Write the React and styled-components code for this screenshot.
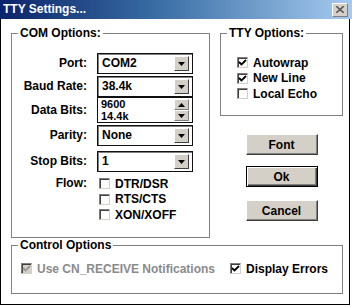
import React from 'react'
import styled, { createGlobalStyle } from 'styled-components'

const GlobalStyle = createGlobalStyle`
    html, body {
        margin: 0;
        padding: 0;
        background: #fff;
    }
    body {
        font-family: "Liberation Sans", Arial, sans-serif;
        font-size: 12px;
        font-weight: 700;
        color: #000;
    }
`

function Arrow({ up }) {
    return (
        <svg width="7" height="4" viewBox="0 0 7 4">
            <polygon points={up ? '3.5,0 7,4 0,4' : '0,0 7,0 3.5,4'} fill="#000" />
        </svg>
    )
}

function Tick({ color = '#000' }) {
    return (
        <svg width="9" height="9" viewBox="0 0 9 9">
            <path d="M1 4 L3.5 6.5 L8 2" stroke={color} strokeWidth="1.8" fill="none" />
        </svg>
    )
}

function Combo({ value }) {
    return (
        <Field>
            <FieldText>{value}</FieldText>
            <DropButton><Arrow /></DropButton>
        </Field>
    )
}

function CheckItem({ label, checked, disabled }) {
    return (
        <CheckRow>
            <CheckBox $disabled={disabled}>
                {checked && <Tick color={disabled ? '#9a9a9a' : '#000'} />}
            </CheckBox>
            <CheckLabel $disabled={disabled}>{label}</CheckLabel>
        </CheckRow>
    )
}

export default function App() {
    return (
        <>
            <GlobalStyle />
            <Window>
                <TitleBar>
                    <Title>TTY Settings...</Title>
                    <CloseButton>
                        <svg width="8" height="7" viewBox="0 0 8 7">
                            <path d="M0 0 L8 7 M8 0 L0 7" stroke="#555" strokeWidth="1.6" />
                        </svg>
                    </CloseButton>
                </TitleBar>
                <Body>
                    <TopRow>
                        <Group $width={199} $height={212}>
                            <Legend>COM Options:</Legend>
                            <FormRow $mt={13}>
                                <Label>Port:</Label>
                                <Combo value="COM2" />
                            </FormRow>
                            <FormRow $mt={2}>
                                <Label>Baud Rate:</Label>
                                <Combo value="38.4k" />
                            </FormRow>
                            <FormRow $mt={0}>
                                <Label>Data Bits:</Label>
                                <ListField>
                                    <ListItems>
                                        <ListItem>9600</ListItem>
                                        <ListItem>14.4k</ListItem>
                                    </ListItems>
                                    <ScrollBar>
                                        <ScrollButton><Arrow up /></ScrollButton>
                                        <ScrollButton><Arrow /></ScrollButton>
                                    </ScrollBar>
                                </ListField>
                            </FormRow>
                            <FormRow $mt={2}>
                                <Label>Parity:</Label>
                                <Combo value="None" />
                            </FormRow>
                            <FormRow $mt={5}>
                                <Label>Stop Bits:</Label>
                                <Combo value="1" />
                            </FormRow>
                            <FormRow $mt={4} $top>
                                <Label>Flow:</Label>
                                <FlowList>
                                    <CheckItem label="DTR/DSR" />
                                    <CheckItem label="RTS/CTS" />
                                    <CheckItem label="XON/XOFF" />
                                </FlowList>
                            </FormRow>
                        </Group>
                        <RightColumn>
                            <Group $height={90}>
                                <Legend>TTY Options:</Legend>
                                <TtyList>
                                    <CheckItem label="Autowrap" checked />
                                    <CheckItem label="New Line" checked />
                                    <CheckItem label="Local Echo" />
                                </TtyList>
                            </Group>
                            <Button $mt={18}>Font</Button>
                            <Button $mt={11} $default>Ok</Button>
                            <Button $mt={13}>Cancel</Button>
                        </RightColumn>
                    </TopRow>
                    <Group $height={56}>
                        <Legend>Control Options</Legend>
                        <ControlRow>
                            <CheckItem label="Use CN_RECEIVE Notifications" checked disabled />
                            <CheckItem label="Display Errors" checked />
                        </ControlRow>
                    </Group>
                </Body>
            </Window>
        </>
    )
}

const Window = styled.div`
    width: 352px;
    height: 305px;
    display: flex;
    flex-direction: column;
    overflow: hidden;
`

const TitleBar = styled.div`
    height: 19px;
    flex: none;
    display: flex;
    align-items: center;
    justify-content: space-between;
    padding: 0 4px 0 3px;
    background: linear-gradient(to right, #0a246a, #3a6ea5 45%, #a6caf0);
`

const Title = styled.span`
    color: #fff;
    font-size: 12px;
    line-height: 19px;
`

const CloseButton = styled.div`
    width: 16px;
    height: 14px;
    box-sizing: border-box;
    display: flex;
    align-items: center;
    justify-content: center;
    background: #d4d0c8;
    border-top: 1px solid #fff;
    border-left: 1px solid #fff;
    border-right: 1px solid #808080;
    border-bottom: 1px solid #808080;
`

const Body = styled.div`
    flex: 1;
    width: 350px;
    box-sizing: border-box;
    border-left: 1px solid #000;
    border-right: 1px solid #000;
    border-bottom: 1px solid #000;
    padding: 7px 6px 10px 10px;
    display: flex;
    flex-direction: column;
`

const TopRow = styled.div`
    display: flex;
    gap: 10px;
    align-items: flex-start;
`

const RightColumn = styled.div`
    width: 123px;
    display: flex;
    flex-direction: column;
    align-items: center;
`

const Group = styled.fieldset`
    margin: 0;
    padding: 0;
    min-width: 0;
    box-sizing: border-box;
    width: ${p => (p.$width ? `${p.$width}px` : '100%')};
    height: ${p => p.$height}px;
    border: 1px solid #808080;
    align-self: stretch;
`

const Legend = styled.legend`
    margin-left: 6px;
    padding: 0 2px;
    font-size: 12px;
    line-height: 14px;
`

const FormRow = styled.div`
    display: grid;
    grid-template-columns: 75px 96px;
    column-gap: 10px;
    align-items: ${p => (p.$top ? 'start' : 'center')};
    margin-top: ${p => p.$mt}px;
`

const Label = styled.span`
    text-align: right;
    line-height: 15px;
`

const Field = styled.div`
    height: 21px;
    box-sizing: border-box;
    border: 1px solid #111;
    box-shadow: inset 1px 1px #808080;
    background: #fff;
    display: flex;
    align-items: center;
    padding: 2px 2px 2px 4px;
`

const FieldText = styled.span`
    flex: 1;
    line-height: 15px;
`

const DropButton = styled.div`
    width: 15px;
    height: 15px;
    box-sizing: border-box;
    display: flex;
    align-items: center;
    justify-content: center;
    background: #d4d0c8;
    border-top: 1px solid #fff;
    border-left: 1px solid #fff;
    border-right: 1px solid #404040;
    border-bottom: 1px solid #404040;
    margin-right: 1px;
`

const ListField = styled.div`
    height: 26px;
    box-sizing: border-box;
    border: 1px solid #111;
    background: #fff;
    display: flex;
    padding: 0 2px 0 3px;
    overflow: hidden;
`

const ListItems = styled.div`
    flex: 1;
    display: flex;
    flex-direction: column;
`

const ListItem = styled.div`
    height: 12px;
    font-size: 11px;
    line-height: 12px;
`

const ScrollBar = styled.div`
    width: 15px;
    display: flex;
    flex-direction: column;
    justify-content: space-between;
    padding: 1px 1px 1px 0;
`

const ScrollButton = styled.div`
    height: 11px;
    box-sizing: border-box;
    display: flex;
    align-items: center;
    justify-content: center;
    background: #d4d0c8;
    border-top: 1px solid #fff;
    border-left: 1px solid #fff;
    border-right: 1px solid #808080;
    border-bottom: 1px solid #808080;
`

const FlowList = styled.div`
    display: flex;
    flex-direction: column;
    padding-left: 2px;
`

const TtyList = styled.div`
    display: flex;
    flex-direction: column;
    padding: 15px 0 0 16px;
`

const CheckRow = styled.div`
    height: 15.5px;
    display: flex;
    align-items: center;
    white-space: nowrap;
`

const CheckBox = styled.span`
    width: 11px;
    height: 11px;
    flex: none;
    box-sizing: border-box;
    display: flex;
    align-items: center;
    justify-content: center;
    background: ${p => (p.$disabled ? '#d4d0c8' : '#fff')};
    border-top: 1px solid #808080;
    border-left: 1px solid #808080;
    border-right: 1px solid #d4d0c8;
    border-bottom: 1px solid #d4d0c8;
    box-shadow: inset 1px 1px #404040;
`

const CheckLabel = styled.span`
    margin-left: 5px;
    color: ${p => (p.$disabled ? '#8a8a8a' : '#000')};
`

const ControlRow = styled.div`
    display: grid;
    grid-template-columns: 209px auto;
    padding: 9px 0 0 9px;
`

const Button = styled.div`
    width: 72px;
    height: 21px;
    box-sizing: border-box;
    margin-top: ${p => p.$mt}px;
    display: flex;
    align-items: center;
    justify-content: center;
    background: #d4d0c8;
    border: 1px solid;
    border-color: ${p => (p.$default ? '#000' : '#fff #404040 #404040 #fff')};
    box-shadow: ${p => (p.$default
        ? 'inset 1px 1px #fff, inset -1px -1px #404040, inset -2px -2px #808080'
        : 'inset -1px -1px #808080')};
`
